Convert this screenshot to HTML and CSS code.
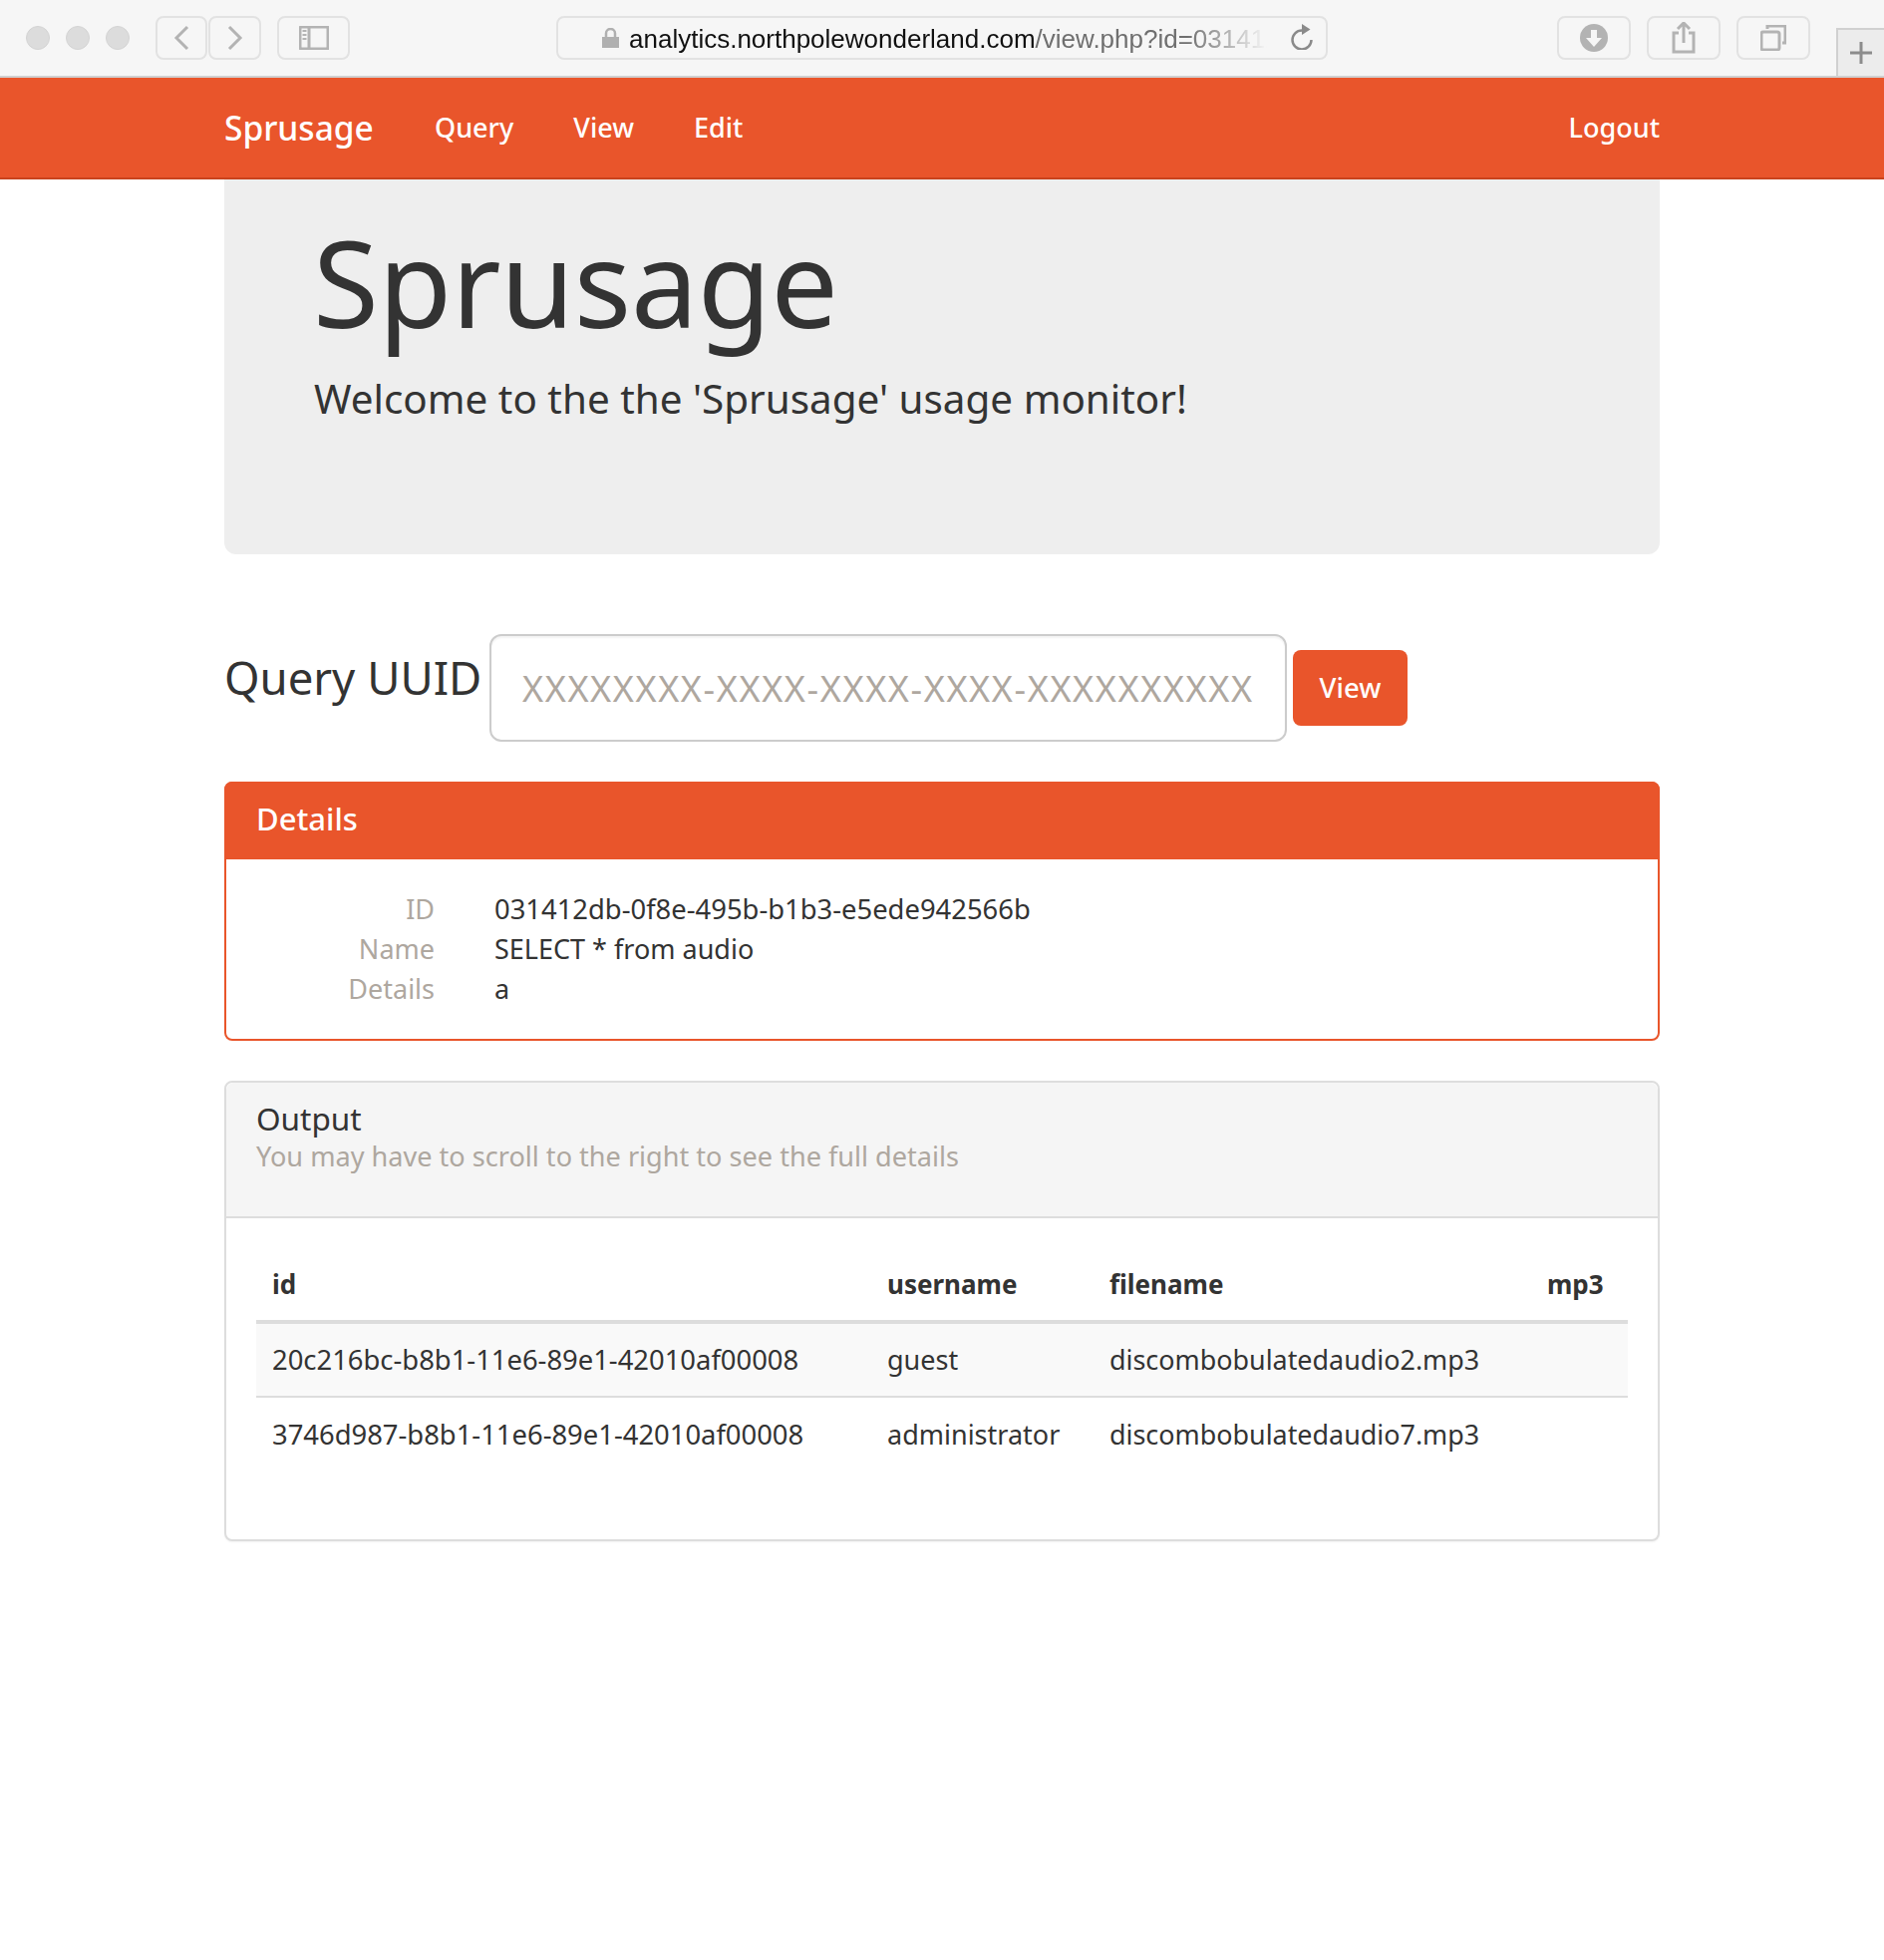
FILE: index.html
```html
<!DOCTYPE html>
<html lang="en">
<head>
<meta charset="utf-8">
<title>Sprusage</title>
<link rel="stylesheet" href="styles.css">
</head>
<body>
<header class="safari">
  <div class="lights"><i></i><i></i><i></i></div>
  <div class="histgroup">
    <button class="tool tool-hist"><svg width="16" height="26" viewBox="0 0 16 26"><path d="M14 2 3 13l11 11" /></svg></button>
    <button class="tool tool-hist tool-fwd"><svg width="16" height="26" viewBox="0 0 16 26"><path d="M2 2l11 11L2 24" /></svg></button>
  </div>
  <button class="tool tool-side"><svg width="30" height="24" viewBox="0 0 30 24"><rect x="1" y="1" width="28" height="22" rx="1"/><path d="M10 1v22"/><path class="thin" d="M3.500 5h4M3.500 9h4M3.500 13h4"/></svg></button>
  <div class="urlbar">
    <svg class="lock" width="17" height="20" viewBox="0 0 17 20"><path class="lock-body" d="M0 9h17v11H0z"/><path d="M4 9V5.500a4.500 4.500 0 0 1 9 0V9"/></svg>
    <span class="url"><b>analytics.northpolewonderland.com</b>/view.php?id=031412</span>
    <svg class="reload" width="22" height="26" viewBox="0 0 22 26"><path d="M11 6.500A9.500 9.500 0 1 0 20.500 16"/><path class="fill" d="M11 0l8.500 5.500L11 11z"/></svg>
  </div>
  <div class="actions">
    <button class="tool tool-act"><svg width="28" height="28" viewBox="0 0 28 28"><circle class="fill" cx="14" cy="14" r="14"/><path class="white" d="M11 6h6v8h5l-8 9-8-9h5z"/></svg></button>
    <button class="tool tool-act"><svg width="24" height="32" viewBox="0 0 24 32"><path d="M7 11H2v19h20V11h-5M12 21V2M6 7l6-6 6 6"/></svg></button>
    <button class="tool tool-act"><svg width="26" height="26" viewBox="0 0 26 26"><rect x="1" y="7" width="18" height="18" rx="2"/><path d="M7 4V1h18v17h-3"/></svg></button>
  </div>
  <div class="newtab"><svg width="24" height="24" viewBox="0 0 24 24"><path d="M12 1v22M1 12h22"/></svg></div>
</header>

<nav class="navbar">
  <div class="nav-inner">
    <a class="brand">Sprusage</a>
    <a class="nav-link">Query</a>
    <a class="nav-link">View</a>
    <a class="nav-link">Edit</a>
    <a class="nav-link logout">Logout</a>
  </div>
</nav>

<main class="container">
  <section class="jumbotron">
    <h1>Sprusage</h1>
    <p>Welcome to the the 'Sprusage' usage monitor!</p>
  </section>

  <form class="query">
    <label class="query-label">Query UUID</label>
    <input class="query-input" placeholder="XXXXXXXX-XXXX-XXXX-XXXX-XXXXXXXXXX">
    <button class="btn" type="button">View</button>
  </form>

  <section class="panel panel-primary">
    <div class="panel-head">Details</div>
    <dl class="details">
      <dt>ID</dt><dd class="uuid">031412db-0f8e-495b-b1b3-e5ede942566b</dd>
      <dt>Name</dt><dd>SELECT * from audio</dd>
      <dt>Details</dt><dd>a</dd>
    </dl>
  </section>

  <section class="panel panel-default">
    <div class="panel-head">
      <div class="output-title">Output</div>
      <div class="output-sub">You may have to scroll to the right to see the full details</div>
    </div>
    <div class="panel-body">
      <table>
        <thead>
          <tr><th class="c-id">id</th><th class="c-user">username</th><th class="c-file">filename</th><th class="c-mp3">mp3</th></tr>
        </thead>
        <tbody>
          <tr><td class="uuid">20c216bc-b8b1-11e6-89e1-42010af00008</td><td>guest</td><td class="file">discombobulatedaudio2.mp3</td><td></td></tr>
          <tr><td class="uuid">3746d987-b8b1-11e6-89e1-42010af00008</td><td>administrator</td><td class="file">discombobulatedaudio7.mp3</td><td></td></tr>
        </tbody>
      </table>
    </div>
  </section>
</main>
</body>
</html>
```

FILE: styles.css
```css
* { box-sizing: border-box; }
html, body { margin: 0; background: #fff; }
body { height: 1966px; overflow: hidden; font-family: "Noto Sans", sans-serif; color: #333; font-size: 27px; }

.safari { height: 78px; background: #f6f6f6; border-bottom: 2px solid #d0d0d0; display: flex; align-items: flex-start; padding: 16px 0 0 26px; position: relative; }
.lights { display: flex; gap: 16px; padding-top: 10px; margin-right: 26px; }
.lights i { width: 24px; height: 24px; border-radius: 50%; background: #dcdcdc; border: 1px solid #d4d4d4; display: block; }
.tool { background: #f6f6f6; border: 2px solid #e2e2e2; border-radius: 8px; height: 44px; padding: 0; display: flex; align-items: center; justify-content: center; }
.tool svg { fill: none; stroke: #b3b3b3; stroke-width: 3; }
.histgroup { display: flex; gap: 1px; }
.tool-hist { width: 52px; }
.tool-fwd { width: 53px; }
.tool-side { width: 73px; margin-left: 16px; }
.tool-side .thin { stroke-width: 2; }
.urlbar { margin-left: 207px; width: 774px; height: 44px; background: #f6f6f6; border: 2px solid #e2e2e2; border-radius: 8px; display: flex; align-items: center; padding: 0 13px 0 44px; position: relative; }
.lock { fill: none; stroke: #b0b0b0; stroke-width: 2.500; flex: none; }
.lock-body { fill: #b0b0b0; stroke: none; }
.url { font-family: "Liberation Sans", sans-serif; font-size: 26px; line-height: 32px; padding-top: 2px; color: #6f6f6f; margin-left: 10px; white-space: nowrap; -webkit-mask-image: linear-gradient(to right, #000 560px, transparent 640px); mask-image: linear-gradient(to right, #000 560px, transparent 640px); }
.url b { font-weight: 400; color: #111; }
.reload { fill: none; stroke: #8a8a8a; stroke-width: 2.500; margin-left: auto; margin-bottom: 2px; flex: none; }
.reload .fill { fill: #8a8a8a; stroke: none; }
.actions { display: flex; gap: 16px; margin-left: 230px; }
.tool-act { width: 74px; }
.tool-act .fill { fill: #b3b3b3; stroke: none; }
.tool-act .white { fill: #f6f6f6; stroke: none; }
.newtab { position: absolute; right: 0; bottom: -2px; width: 48px; height: 50px; background: #ececec; border: 2px solid #d0d0d0; border-width: 2px 0 2px 2px; display: flex; align-items: center; justify-content: center; }
.newtab svg { fill: none; stroke: #8c8c8c; stroke-width: 3; }

.navbar { height: 102px; background: #e9552b; border-bottom: 2px solid #c9431d; }
.nav-inner { width: 1440px; margin: 0 auto; display: flex; align-items: center; height: 100px; color: #fff; }
.brand { font-size: 33.500px; width: 211px; font-weight: 500; }
.nav-link { font-size: 27px; margin-right: 60px; font-weight: 500; padding-bottom: 2px; }
.logout { margin-left: auto; margin-right: 0; }

.container { width: 1440px; margin: 0 auto; }
.jumbotron { height: 376px; background: #eee; border-radius: 0 0 12px 12px; padding: 43px 90px 0 89px; }
.jumbotron h1 { font-size: 120px; font-weight: 400; line-height: 1; margin: 0; color: #333; letter-spacing: -.4px; }
.jumbotron p { font-size: 40.400px; margin: 27px 0 0 1px; line-height: 60px; }

.query { display: flex; align-items: center; margin-top: 80px; }
.query-label { font-size: 45.500px; margin-right: 7px; padding-bottom: 22px; width: 259px; white-space: nowrap; }
.query-input { width: 800px; height: 108px; border: 2px solid #ccc; border-radius: 12px; padding: 0 30px 0 31px; font: 36px "Noto Sans", sans-serif; letter-spacing: 1.600px; background: #fff; box-shadow: inset 0 2px 2px rgba(0,0,0,.05); }
.query-input::placeholder { color: #aea79f; opacity: 1; }
.btn { margin-left: 6px; width: 115px; height: 76px; background: #e9552b; color: #fff; border: 0; border-radius: 8px; font: 500 27.500px "Noto Sans", sans-serif; padding: 0 0 2px; }

.panel { border-radius: 8px; background: #fff; }
.panel-primary { margin-top: 40px; height: 260px; border: 2px solid #e9552b; }
.panel-primary .panel-head { height: 78px; margin: -2px -2px 0; background: #e9552b; color: #fff; border-radius: 8px 8px 0 0; font-size: 31px; font-weight: 500; display: flex; align-items: center; padding: 0 32px 4px; }
.details { margin: 0; display: grid; grid-template-columns: 209px 1fr; column-gap: 60px; padding-top: 30px; line-height: 40px; }
.details dt { text-align: right; color: #aea79f; }
.details dd { margin: 0; }
.uuid { font-size: 27.400px; }
.file { font-size: 26.900px; }

.panel-default { margin-top: 40px; height: 462px; border: 2px solid #ddd; box-shadow: 0 1px 2px rgba(0,0,0,.05); }
.panel-default .panel-head { height: 136px; background: #f5f5f5; border-bottom: 2px solid #ddd; border-radius: 8px 8px 0 0; padding: 16px 30px 0; }
.output-title { font-size: 31.500px; line-height: 40px; }
.output-sub { color: #aea79f; line-height: 36px; font-size: 27.100px; }
.panel-body { padding: 30px; }
table { width: 100%; border-collapse: collapse; table-layout: fixed; }
th { text-align: left; font-weight: 700; padding: 16px; height: 74px; border-bottom: 4px solid #ddd; white-space: nowrap; font-size: 26px; }
td { padding: 14px 16px 16px; height: 75px; white-space: nowrap; }
tbody tr:first-child td { background: #f9f9f9; border-bottom: 2px solid #ddd; }
.c-id { width: 617px; }
.c-user { width: 223px; }
.c-file { width: 439px; }
```
